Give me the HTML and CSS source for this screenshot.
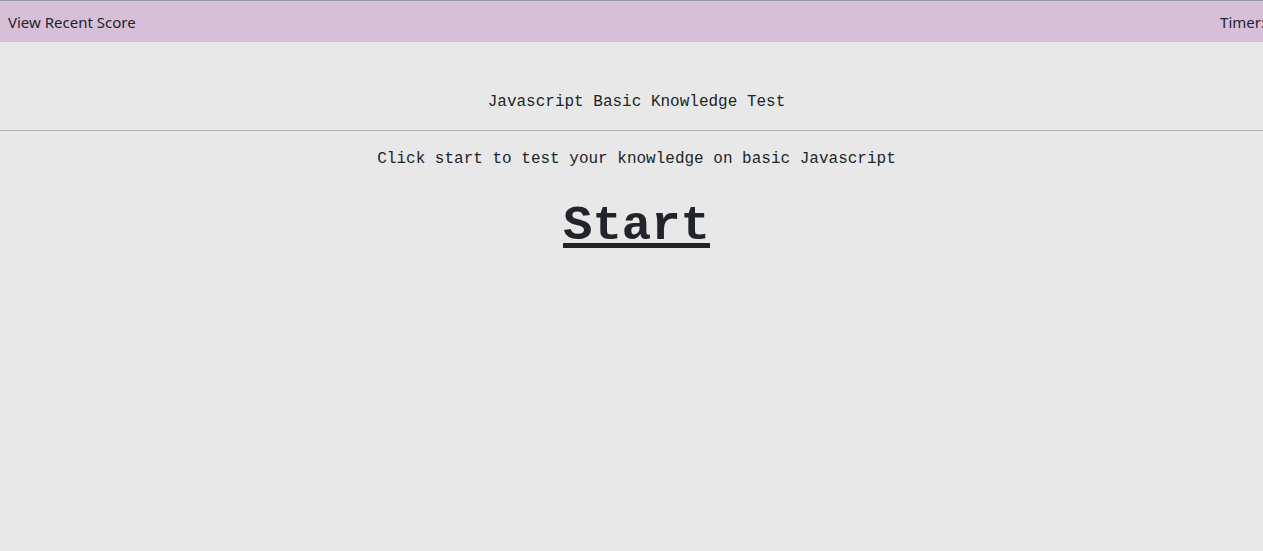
FILE: index.html
```html
<!DOCTYPE html>
<html>
<head>
<meta charset="utf-8">
<link rel="stylesheet" href="styles.css">
</head>
<body>
<div class="page">
  <header class="topbar">
    <a class="recent">View Recent Score</a>
    <span class="timer">Timer:</span>
  </header>
  <main class="main">
    <h1 class="title">Javascript Basic Knowledge Test</h1>
    <hr class="rule">
    <p class="intro">Click start to test your knowledge on basic Javascript</p>
    <a class="start">Start</a>
  </main>
</div>
</body>
</html>
```
FILE: styles.css
```css
html, body {
  margin: 0;
  padding: 0;
}
body {
  background: #e8e8e8;
  color: #212529;
  font-family: "Liberation Mono", monospace;
  overflow: hidden;
  height: 551px;
}
.page {
  width: 1273px;
}
.topbar {
  display: flex;
  justify-content: space-between;
  align-items: center;
  height: 41px;
  background: #d8bfd8;
  border-top: 1px solid #8e9ab0;
  font-family: "Noto Sans", "Open Sans", sans-serif;
  font-size: 15px;
  padding: 0 8px;
  white-space: nowrap;
}
.recent {
  color: #212529;
}
.timer {
  color: #212529;
}
.main {
  display: flex;
  flex-direction: column;
  align-items: center;
}
.title {
  margin: 50px 0 0;
  font-size: 16px;
  font-weight: normal;
  line-height: 20px;
}
.rule {
  align-self: stretch;
  margin: 18px 0 0;
  border: none;
  border-top: 1px solid #b4b4b4;
  height: 0;
}
.intro {
  margin: 18px 0 0;
  font-size: 16px;
  line-height: 20px;
}
.start {
  margin-top: 27px;
  font-size: 49px;
  font-weight: bold;
  line-height: 60px;
  color: #212529;
  text-decoration: underline;
  text-decoration-thickness: 5px;
  text-underline-offset: 4px;
}
```
